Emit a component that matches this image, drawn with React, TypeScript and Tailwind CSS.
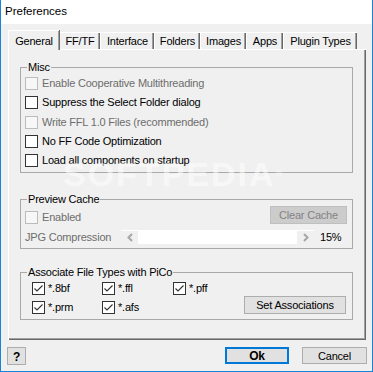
import React from 'react'

const font = { fontFamily: '"Liberation Sans", Arial, sans-serif' }

type CheckProps = {
    label: string;
    checked?: boolean;
    disabled?: boolean;
    gap?: string;
}

const CheckBox = ({ label, checked, disabled, gap = 'gap-[4px]' }: CheckProps) => {
    return (
        <div className={`flex items-center ${gap}`}>
            <div
                className={`flex h-[13px] w-[13px] shrink-0 items-center justify-center border ${
                    disabled ? 'border-[#bcbcbc] bg-[#f7f7f7]' : 'border-[#333333] bg-white'
                }`}
            >
                {checked && (
                    <svg width="11" height="11" viewBox="0 0 11 11">
                        <polyline points="1.5,5.5 4,8 9.5,2.5" fill="none" stroke="#333333" strokeWidth="1.1" />
                    </svg>
                )}
            </div>
            <span className={`whitespace-nowrap leading-[13px] ${disabled ? 'text-[#6d6d6d]' : 'text-black'}`}>
                {label}
            </span>
        </div>
    )
}

type GroupProps = {
    title: string;
    className: string;
    children: React.ReactNode;
}

const GroupBox = ({ title, className, children }: GroupProps) => {
    return (
        <fieldset className={`w-[333px] border border-[#a9a9a9] ${className}`}>
            <legend className="ml-[6px] px-[1px] leading-[14px] text-black">{title}</legend>
            {children}
        </fieldset>
    )
}

const tabs = [
    { label: 'General', w: 'w-[51px]' },
    { label: 'FF/TF', w: 'w-[41px]' },
    { label: 'Interface', w: 'w-[54px]' },
    { label: 'Folders', w: 'w-[46px]' },
    { label: 'Images', w: 'w-[46px]' },
    { label: 'Apps', w: 'w-[37px]' },
    { label: 'Plugin Types', w: 'w-[74px]' },
]

const Chevron = ({ dir }: { dir: 'left' | 'right' }) => (
    <svg width="6" height="9" viewBox="0 0 6 9">
        <polyline
            points={dir === 'left' ? '5,1 1.5,4.5 5,8' : '1,1 4.5,4.5 1,8'}
            fill="none"
            stroke="#a6a6a6"
            strokeWidth="2"
        />
    </svg>
)

export default function App() {
    return (
        <div
            className="relative flex h-[372px] w-[373px] flex-col overflow-hidden border-x border-b border-[#1883d7] bg-[#f0f0f0] text-[11px] tracking-[-0.2px]"
            style={font}
        >
            {/* title bar */}
            <div className="flex h-[24px] shrink-0 items-center bg-white pl-[4px] text-[11.5px] tracking-normal text-black">
                Preferences
            </div>

            <div className="pl-[7px] pt-[6px]">
                {/* tabs */}
                <div className="flex h-[19px] items-end">
                    {tabs.map((tab, i) =>
                        i === 0 ? (
                            <div
                                key={tab.label}
                                className={`relative z-10 -mb-px flex h-[20px] ${tab.w} items-start justify-center border-l border-t border-white bg-[#f0f0f0] pt-[2px] shadow-[inset_-1px_0_0_#a0a0a0,1px_0_0_#696969]`}
                            >
                                {tab.label}
                            </div>
                        ) : (
                            <div
                                key={tab.label}
                                className={`flex h-[17px] ${tab.w} items-center justify-center border-l border-t border-white shadow-[inset_-1px_0_0_#696969,inset_-2px_0_0_#a0a0a0]`}
                            >
                                {tab.label}
                            </div>
                        )
                    )}
                </div>

                {/* panel */}
                <div className="flex h-[291px] w-[358px] flex-col border-l border-t border-white px-[11px] shadow-[inset_-1px_-1px_0_#696969,inset_-2px_-2px_0_#a0a0a0]">
                    <GroupBox title="Misc" className="mt-[10px] h-[113px]">
                        <div className="flex flex-col pl-[4px]">
                            <div className="flex h-[19.3px] items-center">
                                <CheckBox label="Enable Cooperative Multithreading" disabled />
                            </div>
                            <div className="flex h-[19.3px] items-center">
                                <CheckBox label="Suppress the Select Folder dialog" />
                            </div>
                            <div className="flex h-[19.3px] items-center">
                                <CheckBox label="Write FFL 1.0 Files (recommended)" disabled />
                            </div>
                            <div className="flex h-[19.3px] items-center">
                                <CheckBox label="No FF Code Optimization" />
                            </div>
                            <div className="flex h-[19.3px] items-center">
                                <CheckBox label="Load all components on startup" />
                            </div>
                        </div>
                    </GroupBox>

                    <GroupBox title="Preview Cache" className="mt-[19px] h-[57px]">
                        <div className="flex h-[18px] items-start justify-between pl-[4px] pr-[5px]">
                            <div className="mt-[5px]">
                                <CheckBox label="Enabled" disabled />
                            </div>
                            <button className="h-[18px] w-[77px] border border-[#bfbfbf] bg-[#cccccc] text-[#838383]">
                                Clear Cache
                            </button>
                        </div>
                        <div className="mt-[6px] flex h-[14px] items-center pl-[4px]">
                            <span className="w-[96px] text-[#6d6d6d]">JPG Compression</span>
                            <div className="flex h-[14px] w-[193px] border-t border-white">
                                <div className="flex w-[17px] items-center justify-center bg-[#f0f0f0]">
                                    <Chevron dir="left" />
                                </div>
                                <div className="flex-1 bg-white" />
                                <div className="flex w-[17px] items-center justify-center bg-[#f0f0f0]">
                                    <Chevron dir="right" />
                                </div>
                            </div>
                            <span className="ml-[6px] text-black">15%</span>
                        </div>
                    </GroupBox>

                    <GroupBox title="Associate File Types with PiCo" className="mt-[16px] h-[55px]">
                        <div className="flex justify-between pl-[11px] pr-[6px]">
                            <div className="flex flex-col">
                                <div className="flex h-[19px] items-center">
                                    <div className="w-[70px]"><CheckBox label="*.8bf" checked gap="gap-[3px]" /></div>
                                    <div className="w-[71px]"><CheckBox label="*.ffl" checked gap="gap-[3px]" /></div>
                                    <div><CheckBox label="*.pff" checked gap="gap-[3px]" /></div>
                                </div>
                                <div className="flex h-[19px] items-center">
                                    <div className="w-[70px]"><CheckBox label="*.prm" checked gap="gap-[3px]" /></div>
                                    <div className="w-[71px]"><CheckBox label="*.afs" checked gap="gap-[3px]" /></div>
                                </div>
                            </div>
                            <button className="mt-[17px] h-[18px] w-[102px] border border-[#adadad] bg-[#e1e1e1] text-black">
                                Set Associations
                            </button>
                        </div>
                    </GroupBox>
                </div>
            </div>

            {/* bottom buttons */}
            <div className="flex items-start pl-[6px] pr-[5px] pt-[7px]">
                <button className="h-[18px] w-[19px] border border-[#adadad] bg-[#e1e1e1] text-[12px] font-bold text-black">
                    ?
                </button>
                <div className="flex-1" />
                <button className="h-[17px] w-[64px] border-2 border-[#0078d7] bg-[#e1e1e1] text-[12px] font-bold leading-none text-black">
                    Ok
                </button>
                <button className="ml-[13px] h-[17px] w-[65px] border border-[#adadad] bg-[#e1e1e1] text-black">
                    Cancel
                </button>
            </div>

            {/* watermark */}
            <div className="pointer-events-none absolute left-[62px] top-[156px] select-none text-[34px] font-bold leading-[36px] tracking-[2px] text-white/50">
                SOFTPEDIA<span className="align-top text-[9px]">®</span>
            </div>
        </div>
    )
}
